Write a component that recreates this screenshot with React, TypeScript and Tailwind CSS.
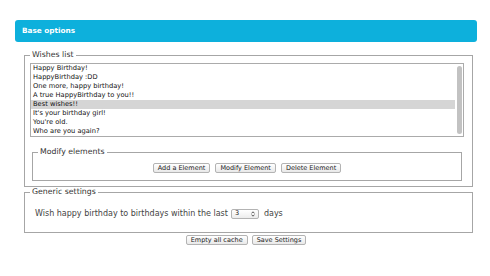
import React from 'react';

const wishes = [
  'Happy Birthday!',
  'HappyBirthday :DD',
  'One more, happy birthday!',
  'A true HappyBirthday to you!!',
  'Best wishes!!',
  "It's your birthday girl!",
  "You're old.",
  'Who are you again?',
];

const Button: React.FC<{ children: React.ReactNode }> = ({ children }) => (
  <button className="h-[10px] px-[4px] rounded-[2px] border border-[#b3b3b3] bg-gradient-to-b from-white to-[#e9e9e9] text-[6.5px] leading-none text-[#222] flex items-center">
    {children}
  </button>
);

export default function App() {
  return (
    <div className="w-[490px] h-[276px] bg-white font-['DejaVu_Sans',sans-serif] text-[#222]">
      <div className="pt-[20px] pl-[15px] w-[477px]">
        {/* Header */}
        <div className="h-[22px] rounded-[3px] bg-[#0db0dc] flex items-center pl-[7px]">
          <span className="text-white font-bold text-[7.3px] leading-none">Base options</span>
        </div>

        <div className="ml-[9px] mr-[4px] mt-[8px]">
          {/* Wishes list */}
          <fieldset className="border border-[#a6a6a6] pl-[5px] pr-[8px] pt-[3px] pb-[5px]">
            <legend className="px-[2px] text-[7.8px] leading-[10px] text-[#333]">Wishes list</legend>
            <div className="h-[74px] border border-[#ababab] flex">
              <div className="flex-1 flex flex-col">
                {wishes.map((w, i) => (
                  <div
                    key={w}
                    className={`h-[9px] pl-[2px] text-[6.7px] leading-[9px] text-[#111] ${i === 4 ? 'bg-[#d5d5d5]' : ''}`}
                  >
                    {w}
                  </div>
                ))}
              </div>
              <div className="w-[8px] flex justify-center pt-[2px] pb-[2px]">
                <div className="w-[5px] rounded-full bg-[#c2c2c2]" />
              </div>
            </div>

            {/* Modify elements */}
            <fieldset className="mt-[10px] mx-[2px] border border-[#a6a6a6] pt-[6px] pb-[7px]">
              <legend className="px-[2px] ml-[5px] text-[7.8px] leading-[10px] text-[#333]">Modify elements</legend>
              <div className="flex justify-center gap-[5px]">
                <Button>Add a Element</Button>
                <Button>Modify Element</Button>
                <Button>Delete Element</Button>
              </div>
            </fieldset>
          </fieldset>

          {/* Generic settings */}
          <fieldset className="border border-[#a6a6a6] pt-[11px] pb-[13px]">
            <legend className="px-[2px] ml-[5px] text-[7.8px] leading-[10px] text-[#333]">Generic settings</legend>
            <div className="h-[11px] pl-[10px] flex items-center text-[8px] text-[#444]">
              <span>Wish happy birthday to birthdays within the last</span>
              <div className="ml-[3px] w-[28px] h-[10px] rounded-[2px] border border-[#b3b3b3] bg-gradient-to-b from-white to-[#ececec] flex items-center justify-between px-[3px]">
                <span className="text-[6.5px] leading-none text-[#222]">3</span>
                <svg width="4" height="6" viewBox="0 0 4 6">
                  <path d="M0.5 2.4 L2 0.8 L3.5 2.4" fill="none" stroke="#333" strokeWidth="0.8" />
                  <path d="M0.5 3.6 L2 5.2 L3.5 3.6" fill="none" stroke="#333" strokeWidth="0.8" />
                </svg>
              </div>
              <span className="ml-[5px]">days</span>
            </div>
          </fieldset>
        </div>

        {/* Bottom buttons */}
        <div className="mt-[2px] flex justify-center gap-[4px]">
          <Button>Empty all cache</Button>
          <Button>Save Settings</Button>
        </div>
      </div>
    </div>
  );
}
